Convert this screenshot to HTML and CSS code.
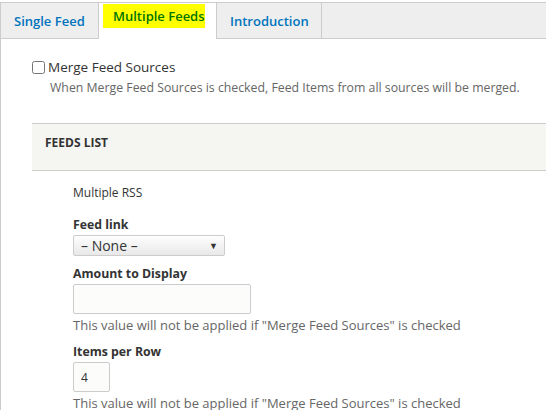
FILE: index.html
```html
<!DOCTYPE html>
<html lang="en">

<head>
    <meta charset="utf-8">
    <meta name="viewport" content="width=device-width, initial-scale=1.0">
    <title>Feeds block</title>
    <link rel="stylesheet" href="styles.css">
</head>

<body>
    <nav class="tabs">
        <a class="tab" href="#">Single Feed</a>
        <a class="tab aktiv" href="#"><span class="marker">Multiple Feeds</span></a>
        <a class="tab" href="#">Introduction</a>
    </nav>

    <main class="panel">
        <div class="merge">
            <label class="check_label"><input type="checkbox"> Merge Feed Sources</label>
            <p class="beskrivelse">When Merge Feed Sources is checked, Feed Items from all sources will be merged.</p>
        </div>

        <section class="feeds_list">
            <h2>FEEDS LIST</h2>

            <div class="felter">
                <p class="titel">Multiple RSS</p>

                <div class="felt">
                    <label for="feed_link">Feed link</label>
                    <div class="select">
                        <span>– None –</span>
                        <span class="pil">&#9660;</span>
                    </div>
                </div>

                <div class="felt">
                    <label for="amount">Amount to Display</label>
                    <input class="tekstfelt" id="amount" type="text">
                    <p class="beskrivelse">This value will not be applied if "Merge Feed Sources" is checked</p>
                </div>

                <div class="felt">
                    <label for="items">Items per Row</label>
                    <input class="tekstfelt lille" id="items" type="text" value="4">
                    <p class="beskrivelse">This value will not be applied if "Merge Feed Sources" is checked</p>
                </div>
            </div>
        </section>
    </main>
</body></html>
```

FILE: styles.css
```css
* {
    box-sizing: border-box;
    margin: 0;
}

body {
    font-family: "Open Sans", sans-serif;
    color: #333;
    background-color: white;
    font-size: 12px;
}

.tabs {
    display: flex;
    margin-top: 2px;
    height: 37px;
    background-color: #eee;
    border: 1px solid #ccc;
    border-right: none;
}

.tab {
    display: flex;
    align-items: center;
    padding: 0 13px;
    font-size: 13px;
    font-weight: 600;
    color: #0074bd;
    text-decoration: none;
    border-right: 1px solid #ccc;
}

.tab:first-child {
    width: 98px;
}

.aktiv {
    background-color: white;
    margin-bottom: -1px;
    padding: 0 0 0 4px;
    width: 118px;
    align-items: flex-start;
}

/* gul overstregning paa den valgte fane */
.marker {
    background-color: #ffff00;
    color: #007400;
    margin-top: 1px;
    padding: 3px 0 3px 10px;
    width: 102px;
}

.tab:last-child {
    width: 105px;
}

.panel {
    border-left: 1px solid #ccc;
    padding: 19px 0 0 31px;
    min-height: 400px;
}

.check_label {
    display: flex;
    align-items: center;
    gap: 3px;
    font-size: 13.5px;
    color: #333;
}

.check_label input {
    width: 13px;
    height: 13px;
    margin: 0;
}

.merge .beskrivelse {
    padding-left: 18px;
    margin-top: 3px;
    font-size: 12.3px;
}

.beskrivelse {
    font-size: 13px;
    color: #666;
}

.feeds_list {
    margin-top: 27px;
}

.feeds_list h2 {
    font-size: 12px;
    font-weight: 700;
    color: #333;
    background-color: #f5f5f2;
    border-top: 1px solid #ccc;
    border-bottom: 1px solid #ccc;
    height: 48px;
    padding: 10px 0 0 13px;
}

.felter {
    padding: 13px 0 0 41px;
}

.titel {
    font-size: 12px;
    color: #333;
    margin-bottom: 15px;
}

.felt {
    margin-bottom: 9px;
}

.felt label {
    display: block;
    font-size: 12.3px;
    font-weight: 700;
    color: #333;
    margin-bottom: 2px;
}

.select {
    display: flex;
    justify-content: space-between;
    align-items: center;
    width: 152px;
    height: 21px;
    padding: 0 6px 0 7px;
    border: 1px solid #ccc;
    border-radius: 2px;
    background: linear-gradient(#fefefe, #e8e8e8);
    font-size: 14px;
    color: #333;
}

.pil {
    font-size: 9px;
    color: #333;
}

.tekstfelt {
    display: block;
    width: 178px;
    height: 30px;
    border: 1px solid #ccc;
    border-radius: 2px;
    background-color: #fcfcfa;
    font-family: "Open Sans", sans-serif;
    font-size: 12px;
    color: #333;
    padding: 0 8px;
    margin-bottom: 2px;
}

.lille {
    width: 37px;
    padding: 0 7px;
}
```
